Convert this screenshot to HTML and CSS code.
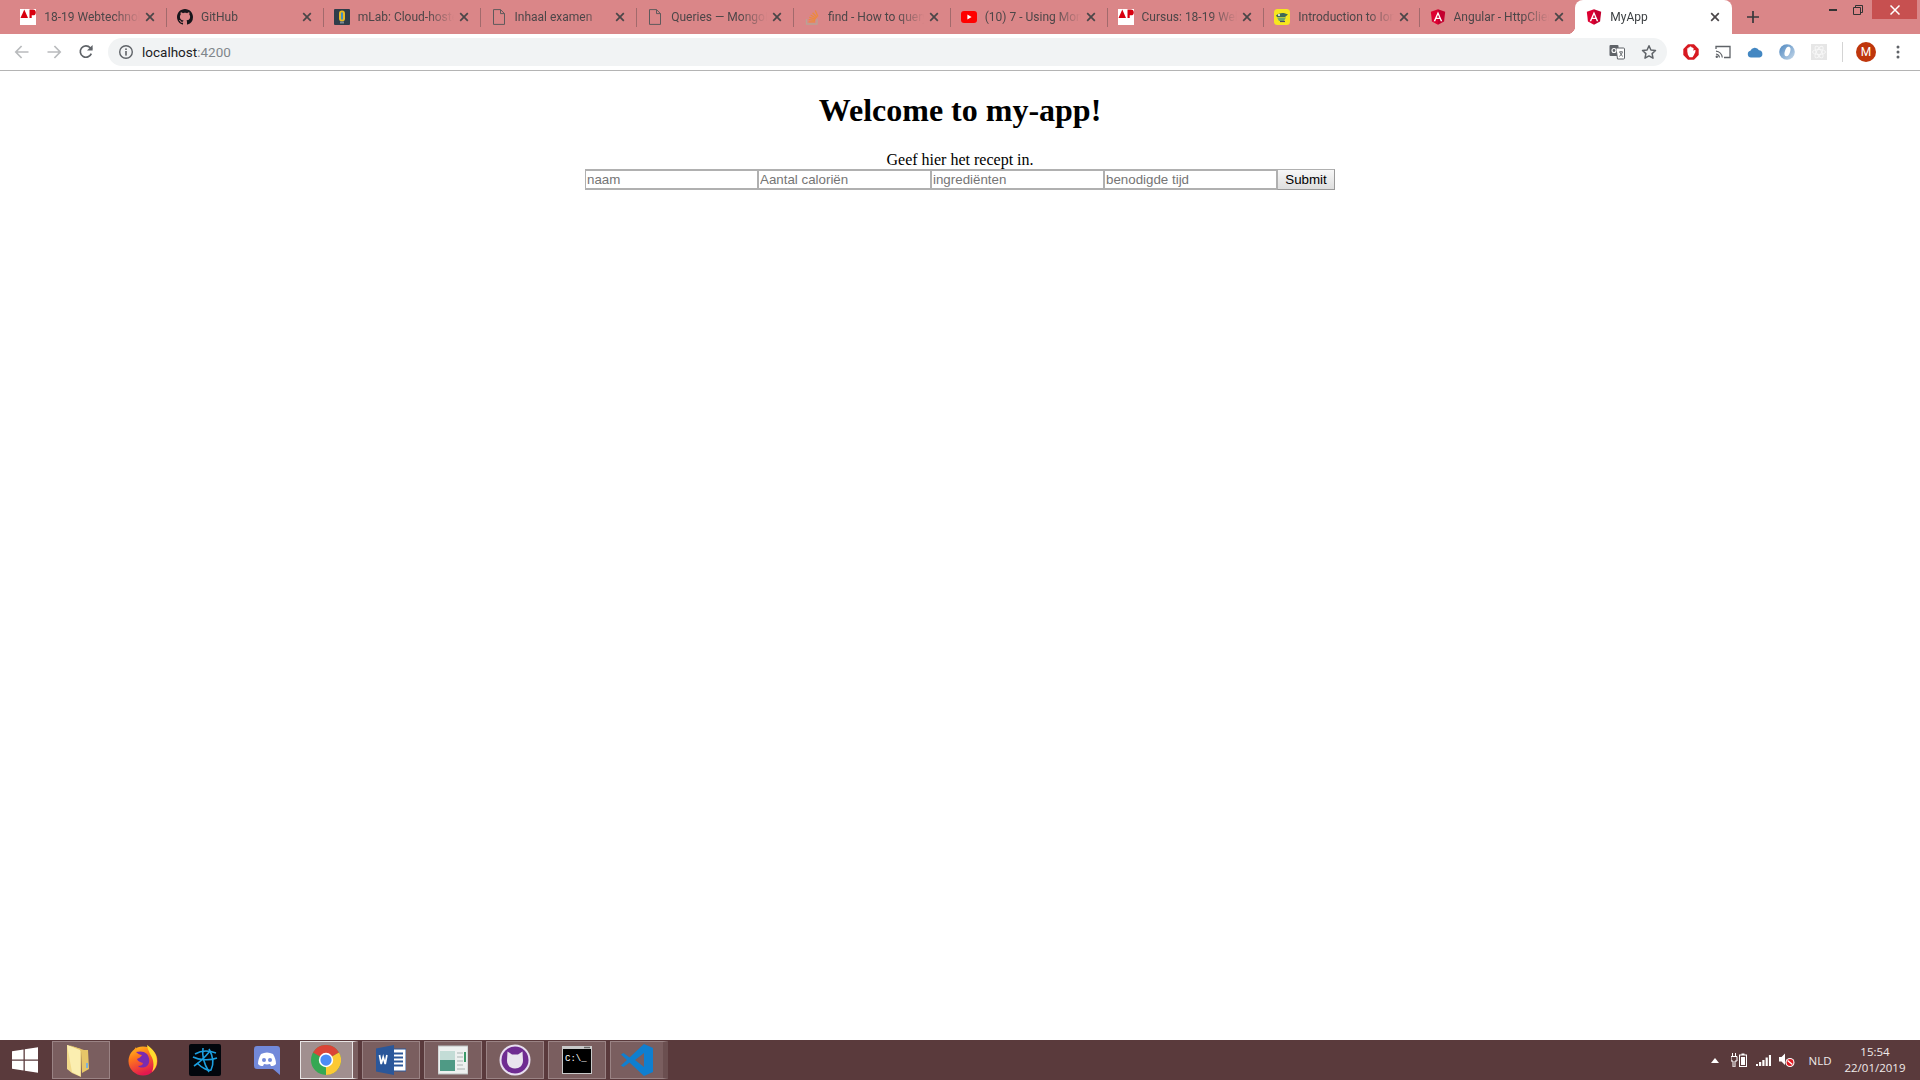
FILE: index.html
```html
<!DOCTYPE html>
<html lang="nl">
<head>
<meta charset="utf-8">
<title>MyApp</title>
<link rel="stylesheet" href="styles.css">
</head>
<body>
<svg class="defs" width="0" height="0" aria-hidden="true">
  <symbol id="ap" viewBox="0 0 16 16"><rect width="16" height="16" fill="#fff"/><path d="M4.3 0.5L8 9H0.5z" fill="#d8000f"/><path d="M9.5 0.5h3.4a2.9 2.9 0 0 1 0 5.8h-1.2V9H9.5z" fill="#d8000f"/></symbol>
  <symbol id="close" viewBox="0 0 10 10"><path d="M1.2 1.2L8.8 8.8M8.8 1.2L1.2 8.8" stroke="#4a4648" stroke-width="1.7" fill="none"/></symbol>
  <symbol id="doc" viewBox="0 0 16 16"><path d="M2.5 0.6H9.5L13.5 4.6V15.4H2.5zM9.5 0.6V4.6H13.5" fill="none" stroke="#5f5a5c" stroke-width="1"/></symbol>
  <symbol id="angular" viewBox="28 18 194 214"><path d="M125 20L29 55l15 130 81 45z" fill="#dd0031"/><path d="M125 20v210l81-45 15-130z" fill="#c3002f"/><path d="M125 52.1L66.8 182.6h21.7l11.7-29.2h49.4l11.7 29.2H182L125 52.1zm17 83.3h-34l17-40.9 17 40.9z" fill="#fff"/></symbol>
</svg>

<header class="browser">
  <div class="tabstrip">
    <div class="tab first">
      <svg class="fav"><use href="#ap"/></svg><span class="title">18-19 Webtechnologie</span><svg class="x"><use href="#close"/></svg>
    </div>
    <div class="tab">
      <svg class="fav" viewBox="0 0 16 16"><path fill="#17151a" fill-rule="evenodd" d="M8 0C3.58 0 0 3.58 0 8c0 3.54 2.29 6.53 5.47 7.59.4.07.55-.17.55-.38 0-.19-.01-.82-.01-1.49-2.01.37-2.53-.49-2.69-.94-.09-.23-.48-.94-.82-1.13-.28-.15-.68-.52-.01-.53.63-.01 1.08.58 1.23.82.72 1.21 1.87.87 2.33.66.07-.52.28-.87.51-1.07-1.78-.2-3.64-.89-3.64-3.95 0-.87.31-1.59.82-2.15-.08-.2-.36-1.02.08-2.12 0 0 .67-.21 2.2.82.64-.18 1.32-.27 2-.27.68 0 1.36.09 2 .27 1.53-1.04 2.2-.82 2.2-.82.44 1.1.16 1.92.08 2.12.51.56.82 1.27.82 2.15 0 3.07-1.87 3.75-3.65 3.95.29.25.54.73.54 1.48 0 1.07-.01 1.93-.01 2.2 0 .21.15.46.55.38A8.013 8.013 0 0016 8c0-4.42-3.58-8-8-8z"/></svg><span class="title">GitHub</span><svg class="x"><use href="#close"/></svg>
    </div>
    <div class="tab">
      <svg class="fav" viewBox="0 0 16 16"><rect width="16" height="16" rx="1" fill="#2f3d4a"/><rect x="5" y="1.5" width="6" height="11" rx="3" fill="#e8b923"/><rect x="7" y="3.5" width="2" height="7" fill="#3f8fc4"/><rect x="6" y="12.5" width="4" height="2" fill="#7a8a96"/></svg><span class="title">mLab: Cloud-hosted</span><svg class="x"><use href="#close"/></svg>
    </div>
    <div class="tab">
      <svg class="fav"><use href="#doc"/></svg><span class="title">Inhaal examen</span><svg class="x"><use href="#close"/></svg>
    </div>
    <div class="tab">
      <svg class="fav"><use href="#doc"/></svg><span class="title">Queries — MongoDB</span><svg class="x"><use href="#close"/></svg>
    </div>
    <div class="tab">
      <svg class="fav" viewBox="0 0 16 16"><path d="M2.5 10v5h10.5v-5" fill="none" stroke="#b9a394" stroke-width="1.3"/><path d="M4.5 12.8h6.5M4.7 10.6l6.4.7M5.3 8.4l6.3 1.7M6.6 6l5.5 3.3M8.6 3.7l4.4 4.8M11.3 1.6l2.6 5.9" stroke="#ec8a3c" stroke-width="1.3" fill="none"/></svg><span class="title">find - How to query</span><svg class="x"><use href="#close"/></svg>
    </div>
    <div class="tab">
      <svg class="fav" viewBox="0 0 16 16"><rect y="2" width="16" height="12" rx="3" fill="#f00"/><path d="M6.4 5.6L10.6 8 6.4 10.4z" fill="#fff"/></svg><span class="title">(10) 7 - Using MongoDB</span><svg class="x"><use href="#close"/></svg>
    </div>
    <div class="tab">
      <svg class="fav"><use href="#ap"/></svg><span class="title">Cursus: 18-19 Webtech</span><svg class="x"><use href="#close"/></svg>
    </div>
    <div class="tab">
      <svg class="fav" viewBox="0 0 16 16"><rect width="16" height="16" rx="3.5" fill="#f6e71f"/><path d="M2 6.5C5 3.5 10 3 14 5.5L11 8H3z" fill="#3f6a57"/><path d="M3 8.5h9l-2 3.5H5z" fill="#6fa86a"/><circle cx="5" cy="6" r="1" fill="#fff"/><path d="M6 12.5h5" stroke="#4a4a68" stroke-width="1.2"/></svg><span class="title">Introduction to Ionic</span><svg class="x"><use href="#close"/></svg>
    </div>
    <div class="tab narrow">
      <svg class="fav"><use href="#angular"/></svg><span class="title">Angular - HttpClient</span><svg class="x"><use href="#close"/></svg>
    </div>
    <div class="tab active">
      <svg class="fav"><use href="#angular"/></svg><span class="title">MyApp</span><svg class="x"><use href="#close"/></svg>
    </div>
    <div class="newtab">
      <svg width="12" height="12" viewBox="0 0 12 12"><path d="M6 0V12M0 6H12" stroke="#37383b" stroke-width="1.7"/></svg>
    </div>
    <div class="winctl">
      <div class="wbtn"><svg width="8" height="2" viewBox="0 0 8 2"><rect width="8" height="2" fill="#333"/></svg></div>
      <div class="wbtn"><svg width="10" height="10" viewBox="0 0 10 10"><path d="M0.5 2.5H7.5V9.5H0.5zM2.5 2.5V0.5H9.5V7.5H7.5" fill="none" stroke="#333"/></svg></div>
      <div class="wbtn wclose"><svg width="10" height="10" viewBox="0 0 10 10"><path d="M0.5 0.5L9.5 9.5M9.5 0.5L0.5 9.5" stroke="#fff" stroke-width="1.5"/></svg></div>
    </div>
  </div>

  <div class="toolbar">
    <div class="tbtn"><svg width="16" height="16" viewBox="0 0 16 16"><path d="M14.5 8H2M7.6 2L1.8 8l5.8 6" fill="none" stroke="#b9bbbd" stroke-width="1.7"/></svg></div>
    <div class="tbtn"><svg width="16" height="16" viewBox="0 0 16 16"><path d="M1.5 8H14M8.4 2l5.8 6-5.8 6" fill="none" stroke="#b9bbbd" stroke-width="1.7"/></svg></div>
    <div class="tbtn"><svg width="16" height="16" viewBox="0 0 16 16"><path d="M13.3 9.6A5.7 5.7 0 1 1 12.2 3.7L13.9 5.4" fill="none" stroke="#5f6368" stroke-width="1.7"/><path d="M14.6 1v5.6H9z" fill="#5f6368"/></svg></div>
    <div class="omnibox">
      <svg class="info" width="16" height="16" viewBox="0 0 16 16"><circle cx="8" cy="8" r="6.3" fill="none" stroke="#5f6368" stroke-width="1.4"/><rect x="7.2" y="7" width="1.6" height="4.6" fill="#5f6368"/><rect x="7.2" y="4.4" width="1.6" height="1.6" fill="#5f6368"/></svg>
      <span class="url">localhost<span class="port">:4200</span></span>
      <div class="tbtn push"><svg width="16" height="16" viewBox="0 0 16 16"><rect x="0.5" y="1" width="9" height="11" rx="1" fill="#5f6368"/><path d="M7 4h7.5a1 1 0 0 1 1 1v9a1 1 0 0 1-1 1H8.5z" fill="#fff" stroke="#5f6368"/><circle cx="5" cy="6.5" r="2" fill="none" stroke="#fff" stroke-width="1.1"/><path d="M10 8h4M12 7v1M10.5 12.5L13.5 8.5M11 8.5l2.5 4" stroke="#5f6368" stroke-width=".9" fill="none"/></svg></div>
      <div class="tbtn"><svg width="16" height="16" viewBox="0 0 16 16"><path d="M8 1.8l1.9 4.2 4.6.5-3.4 3.1.9 4.6L8 11.900l-4 2.300.9-4.600-3.400-3.100 4.600-.5z" fill="none" stroke="#5f6368" stroke-width="1.5" stroke-linejoin="round"/></svg></div>
    </div>
    <div class="tbtn"><svg width="16" height="16" viewBox="0 0 16 16"><path d="M5 0.3H11L15.7 5V11L11 15.700H5L0.300 11V5z" fill="#d71920"/><path d="M4.300 7.500V4.300h1.200V3.200h1.300v-.6H8.200v.6h1.300V4.100h1v2.800l1-.9h1l-.2 2.200-1.800 3.600-1 1.400H6.500l-1.600-2.500z" fill="#fff"/></svg></div>
    <div class="tbtn"><svg width="16" height="16" viewBox="0 0 16 16"><path d="M1 5V2.500h14V13.500H9" fill="none" stroke="#5f6368" stroke-width="1.3"/><path d="M1 7.200a7 7 0 0 1 6.300 6.300M1 10a4 4 0 0 1 3.500 3.500" fill="none" stroke="#5f6368" stroke-width="1.2"/><circle cx="1.800" cy="12.800" r="1.200" fill="#5f6368"/></svg></div>
    <div class="tbtn"><svg width="16" height="12" viewBox="0 0 16 12"><path d="M4 11.500A3.400 3.400 0 0 1 3.400 4.800 4.700 4.700 0 0 1 12 4.200 3.700 3.700 0 0 1 12.500 11.500z" fill="#4387c2"/></svg></div>
    <div class="tbtn"><svg width="16" height="16" viewBox="0 0 16 16"><defs><linearGradient id="ring" x1="0" y1="0" x2="1" y2="1"><stop offset="0" stop-color="#4d87c0"/><stop offset="1" stop-color="#c7d9ea"/></linearGradient></defs><circle cx="8" cy="8" r="7.800" fill="url(#ring)"/><ellipse cx="8.500" cy="7.500" rx="2.600" ry="5" fill="#fff" transform="rotate(18 8.500 7.500)"/></svg></div>
    <div class="tbtn"><svg width="16" height="16" viewBox="0 0 16 16"><rect width="16" height="16" fill="#e6e6e6"/><g fill="none" stroke="#f8f8f8" stroke-width=".9"><ellipse cx="8" cy="8" rx="6.500" ry="2.500"/><ellipse cx="8" cy="8" rx="6.500" ry="2.500" transform="rotate(60 8 8)"/><ellipse cx="8" cy="8" rx="6.500" ry="2.500" transform="rotate(120 8 8)"/></g></svg></div>
    <div class="tsep"></div>
    <div class="tbtn"><span class="avatar">M</span></div>
    <div class="tbtn"><svg width="4" height="14" viewBox="0 0 4 14"><circle cx="2" cy="2" r="1.500" fill="#5f6368"/><circle cx="2" cy="7" r="1.500" fill="#5f6368"/><circle cx="2" cy="12" r="1.500" fill="#5f6368"/></svg></div>
  </div>
</header>

<main class="page">
  <h1>Welcome to my-app!</h1>
  <p class="intro">Geef hier het recept in.</p>
  <form class="recipe">
    <input type="text" placeholder="naam">
    <input type="text" placeholder="Aantal caloriën">
    <input type="text" placeholder="ingrediënten">
    <input type="text" placeholder="benodigde tijd">
    <button type="button">Submit</button>
  </form>
</main>

<footer class="taskbar">
  <div class="start"><svg width="26" height="26" viewBox="0 0 26 26"><path d="M0 4.200L11.500 2.500V12.400H0zM12.800 2.300L26 .3V12.400H12.800zM0 13.700H11.500V23.500L0 21.800zM12.800 13.700H26V25.700L12.800 23.700z" fill="#fff"/></svg></div>
  <div class="task open shift">
    <svg width="30" height="34" viewBox="0 0 30 34"><path d="M3 2L17 6V34L8 30 3 26z" fill="#f2da8a"/><path d="M5 2L20 7 24 7 25 26 18 30 17 8z" fill="#e7c668"/><path d="M3 2L16 7V33L8 29z" fill="#fbeeb0"/><rect x="22" y="20" width="2" height="5" fill="#7fb2d8"/></svg>
  </div>
  <div class="task">
    <svg width="30" height="32" viewBox="0 0 30 32"><defs><linearGradient id="ffx" x1="0" y1="0" x2="0.400" y2="1"><stop offset="0" stop-color="#ffcb20"/><stop offset=".4" stop-color="#ff7a1a"/><stop offset="1" stop-color="#e3174f"/></linearGradient></defs><circle cx="15" cy="17" r="14.500" fill="url(#ffx)"/><path d="M19 1c6 4 10 9 10 16 0 5-2 8-5 11 3-7 1-14-2-18-1-3-3-6-3-9z" fill="#ffdc2e"/><path d="M8 8c4-1 8-1 11 2 3 4 3 9 0 12-3 2-7 2-9 0 3 0 5-1 5-3-2-1-5-1-6-4 2-1 4-2 5-4-2 0-4-1-6-3z" fill="#7a2bb0"/><path d="M6 6l2-3 1 4z" fill="#ff9a1f"/></svg>
  </div>
  <div class="task">
    <svg width="32" height="32" viewBox="0 0 32 32"><rect width="32" height="32" rx="2" fill="#02060c"/><g fill="none" stroke="#1b9fe0" stroke-width="1.600"><path d="M14 4c-1 7 1 16 6 24"/><path d="M4 13c6 3 16 4 24 1"/><path d="M21 7c-4 5-10 11-16 15"/><path d="M20 5c4 7 5 15 2 21-3 1-9-2-14-7"/><path d="M6 10c5-3 13-4 21-1"/></g></svg>
  </div>
  <div class="task">
    <svg width="28" height="32" viewBox="0 0 28 32"><path d="M4 2H24a3 3 0 0 1 3 3V31L20 25H4a3 3 0 0 1-3-3V5a3 3 0 0 1 3-3z" fill="#7289da"/><path d="M8 10c4-2 8-2 12 0 2 3 3 7 3 10-2 2-3 2-5 2l-1-2c-2 .5-4 .5-6 0l-1 2c-2 0-3 0-5-2 0-3 1-7 3-10z" fill="#fff"/><circle cx="11" cy="16" r="2" fill="#7289da"/><circle cx="17" cy="16" r="2" fill="#7289da"/></svg>
  </div>
  <div class="task open current">
    <svg width="30" height="30" viewBox="0 0 48 48"><circle cx="24" cy="24" r="24" fill="#34a853"/><path d="M24 24L3.200 12A24 24 0 0 1 44.800 12z" fill="#db4437"/><path d="M24 24L44.800 12A24 24 0 0 1 24 48z" fill="#fcc934"/><circle cx="24" cy="24" r="11.500" fill="#fff"/><circle cx="24" cy="24" r="9" fill="#4c8bf5"/></svg>
  </div>
  <div class="task open">
    <svg width="30" height="30" viewBox="0 0 30 30"><rect x="10" y="4" width="20" height="22" fill="#fff" stroke="#2b579a"/><path d="M16 8.500h11M16 12.500h11M16 16.500h11M16 20.500h11" stroke="#2b579a" stroke-width="1.800"/><path d="M0 3.500L18 0V30L0 26.500z" fill="#2b579a"/><path d="M3.500 10l1.700 9 2-7 2 7 1.700-9" fill="none" stroke="#fff" stroke-width="1.700"/></svg>
  </div>
  <div class="task open">
    <svg width="30" height="30" viewBox="0 0 30 30"><rect y="1" width="30" height="28" fill="#eef1f0" stroke="#b9c0c0"/><rect x="2" y="6" width="15" height="20" fill="#4f9a85"/><rect x="2" y="6" width="15" height="9" fill="#c3dcd6"/><path d="M19 8h6M19 12h6M19 16h6M19 20h6M19 24h8" stroke="#a9b4b2"/><rect x="26" y="7" width="2" height="10" fill="#3b9a68"/></svg>
  </div>
  <div class="task open">
    <svg width="32" height="32" viewBox="0 0 32 32"><circle cx="16" cy="16" r="15.500" fill="#e8dff0"/><circle cx="16" cy="16" r="13.500" fill="#6f2c91"/><path d="M8.500 7.500l4.500 3h6l4.500-3 .5 9c0 5-3.500 8-8 8s-8-3-8-8z" fill="#e9e4ee"/></svg>
  </div>
  <div class="task open">
    <svg width="30" height="28" viewBox="0 0 30 28"><rect width="30" height="28" fill="#c9c9c9"/><rect x="1" y="3" width="28" height="24" fill="#000"/><rect x="22" y=".8" width="6" height="1.400" fill="#666"/></svg>
    <span class="prompt">C:\_</span>
  </div>
  <div class="task open current-ish">
    <svg width="32" height="32" viewBox="0 0 32 32"><path d="M23 0L32 4V28L23 32 8.500 18.500 2.500 23 0 21.500 6 16 0 10.500 2.500 9 8.500 13.500zM23 9L14 16 23 23z" fill="#0f7fd0"/></svg>
  </div>
  <div class="tray">
    <div class="ti"><svg width="8" height="5" viewBox="0 0 8 5"><path d="M4 0L8 5H0z" fill="#fff"/></svg></div>
    <div class="ti"><svg width="16" height="14" viewBox="0 0 16 14"><path d="M1.500 0v3M4.500 0v3M0 3.500H6V8H4V14H2V8H0z" fill="none" stroke="#fff"/><rect x="8.500" y="2" width="7" height="11.500" fill="none" stroke="#fff"/><rect x="10.500" y=".5" width="3" height="1.500" fill="#fff"/><rect x="10" y="4" width="4" height="8" fill="#fff"/></svg></div>
    <div class="ti"><svg width="15" height="11" viewBox="0 0 15 11"><path d="M0 9h2v2H0zM3 7h2.200v4H3zM6.300 5h2.200v6H6.300zM9.600 2.500h2.200V11H9.600zM12.900 0H15v11h-2.100z" fill="#fff"/></svg></div>
    <div class="ti"><svg width="16" height="14" viewBox="0 0 16 14"><path d="M0 4h2.500L6 .5V12L2.500 8.500H0z" fill="#fff"/><circle cx="11" cy="9.500" r="4.500" fill="#fff"/><circle cx="11" cy="9.500" r="3.400" fill="#e01a22"/><path d="M8.600 7.500l4.800 4" stroke="#fff" stroke-width="1.300"/></svg></div>
    <div class="lang">NLD</div>
    <div class="clock"><span>15:54</span><span>22/01/2019</span></div>
  </div>
</footer>
</body>
</html>
```
FILE: styles.css
```css
* { box-sizing: border-box; }
html, body { height: 100%; }
body {
  margin: 0;
  display: flex;
  flex-direction: column;
  height: 100vh;
  overflow: hidden;
  background: #fff;
  font-family: "Liberation Serif", serif;
}
.defs { display: block; width: 0; height: 0; }

/* Browser chrome */
.browser { flex: none; font-family: Roboto, "Noto Sans", sans-serif; }
.tabstrip {
  display: flex;
  height: 34px;
  padding-left: 9.25px;
  background: #da8688;
}
.tab {
  position: relative;
  flex: none;
  width: 156.75px;
  display: flex;
  align-items: center;
  padding: 0 11px;
  font-size: 12px;
  color: #4c4648;
}
.tab::before {
  content: "";
  position: absolute;
  left: 0;
  top: 8px;
  width: 1px;
  height: 19px;
  background: #a26a6c;
}
.tab.first::before, .tab.active::before { display: none; }
.tab.narrow { margin-left: -1.5px; }
.fav { flex: none; width: 16px; height: 16px; margin-right: 8px; }
.title {
  flex: 1;
  min-width: 0;
  white-space: nowrap;
  overflow: hidden;
  margin-right: 5px;
  -webkit-mask-image: linear-gradient(to right, #000 72%, transparent 100%);
  mask-image: linear-gradient(to right, #000 72%, transparent 100%);
}
.x { flex: none; width: 10px; height: 10px; }
.tab.active {
  padding-right: 12px;
  background: #fff;
  border-radius: 8px 8px 0 0;
  color: #3c4043;
}
.tab.active::after,
.newtab::before {
  content: "";
  position: absolute;
  bottom: 0;
  width: 8px;
  height: 8px;
}
.tab.active::after {
  left: -8px;
  background: radial-gradient(circle at 0 0, transparent 8px, #fff 8.5px);
}
.newtab {
  position: relative;
  flex: none;
  width: 28px;
  margin-left: 7px;
  display: flex;
  align-items: center;
  justify-content: center;
}
.newtab::before {
  left: -15px;
  background: radial-gradient(circle at 100% 0, transparent 8px, #fff 8.5px);
}
.winctl {
  margin-left: auto;
  display: flex;
  align-items: center;
  align-self: flex-start;
  height: 19px;
  padding-right: 3px;
}
.wbtn { display: flex; align-items: center; justify-content: center; width: 25px; height: 19px; }
.wclose { width: 45px; margin-left: 2px; background: #c75050; }

.toolbar {
  display: flex;
  align-items: center;
  height: 37px;
  padding: 0 6px 1px;
  background: #fff;
  border-bottom: 1px solid #b4b4b4;
}
.tbtn {
  flex: none;
  width: 32px;
  height: 28px;
  display: flex;
  align-items: center;
  justify-content: center;
}
.omnibox {
  flex: 1;
  display: flex;
  align-items: center;
  height: 28px;
  margin: 0 8px 0 6px;
  padding: 0 2px 0 10px;
  border-radius: 14px;
  background: #f1f3f4;
}
.info { flex: none; margin-right: 8px; }
.url { font-size: 13.5px; color: #202124; }
.port { color: #80868b; }
.push { margin-left: auto; }
.tsep { flex: none; width: 1px; height: 20px; margin: 0 7px; background: #d4d4d4; }
.avatar {
  width: 20px;
  height: 20px;
  border-radius: 50%;
  background: #bf360c;
  color: #fff;
  font-size: 12px;
  line-height: 20px;
  text-align: center;
}

/* Page */
.page { flex: 1; min-height: 0; text-align: center; color: #000; }
h1 { margin: 21.44px 0 20.5px; font-size: 32px; font-weight: 700; line-height: 37px; }
.intro { margin: 0; font-size: 16px; line-height: 19px; }
.recipe { display: flex; justify-content: center; }
.recipe input {
  width: 173px;
  height: 21px;
  padding: 0 1px;
  border: 2px solid #b0b0b0;
  border-width: 2px 1px 2px 1px;
  font: 13.33px "Liberation Sans", Arial, sans-serif;
  background: #fff;
  color: #000;
}
.recipe input::placeholder { color: #757575; opacity: 1; }
.recipe button {
  width: 58px;
  height: 21px;
  padding: 0;
  border: 1px solid #b0b0b0;
  border-right-color: #9a9a9a;
  border-bottom-color: #9a9a9a;
  background: linear-gradient(#f7f7f7, #dedede);
  font: 13.33px "Liberation Sans", Arial, sans-serif;
  color: #000;
}

/* Taskbar */
.taskbar {
  flex: none;
  display: flex;
  align-items: stretch;
  gap: 4px;
  height: 40px;
  padding: 1px 0;
  background: #5a3a3c;
  font-family: "Open Sans", "Noto Sans", sans-serif;
  color: #fff;
}
.start { flex: none; width: 48px; padding-left: 2px; display: flex; align-items: center; justify-content: center; }
.task {
  position: relative;
  flex: none;
  width: 58px;
  display: flex;
  align-items: center;
  justify-content: center;
  border: 1px solid transparent;
}
.task.open { background: #7a5e5f; border-color: #9a8384; }
.task.shift { padding-right: 4px; }
.task.current { background: #a18f8f; border: 1px solid #e9e5e5; border-right: 5px solid #7a5e5f; box-shadow: inset -1px 0 0 #e9e5e5; padding-right: 2px; }
.task.current-ish { border-right: 5px solid #6b4f50; }
.prompt {
  position: absolute;
  left: 16px;
  top: 12px;
  font: 9px/10px "Liberation Mono", monospace;
  color: #fff;
}
.tray { margin-left: auto; display: flex; align-items: center; padding-right: 11px; }
.ti { flex: none; width: 24px; display: flex; align-items: center; justify-content: center; }
.lang { flex: none; width: 42px; text-align: center; font-size: 11.5px; color: #f0eaea; }
.clock { flex: none; width: 68px; display: flex; flex-direction: column; align-items: center; font-size: 11.5px; line-height: 16px; color: #f0eaea; }
```
